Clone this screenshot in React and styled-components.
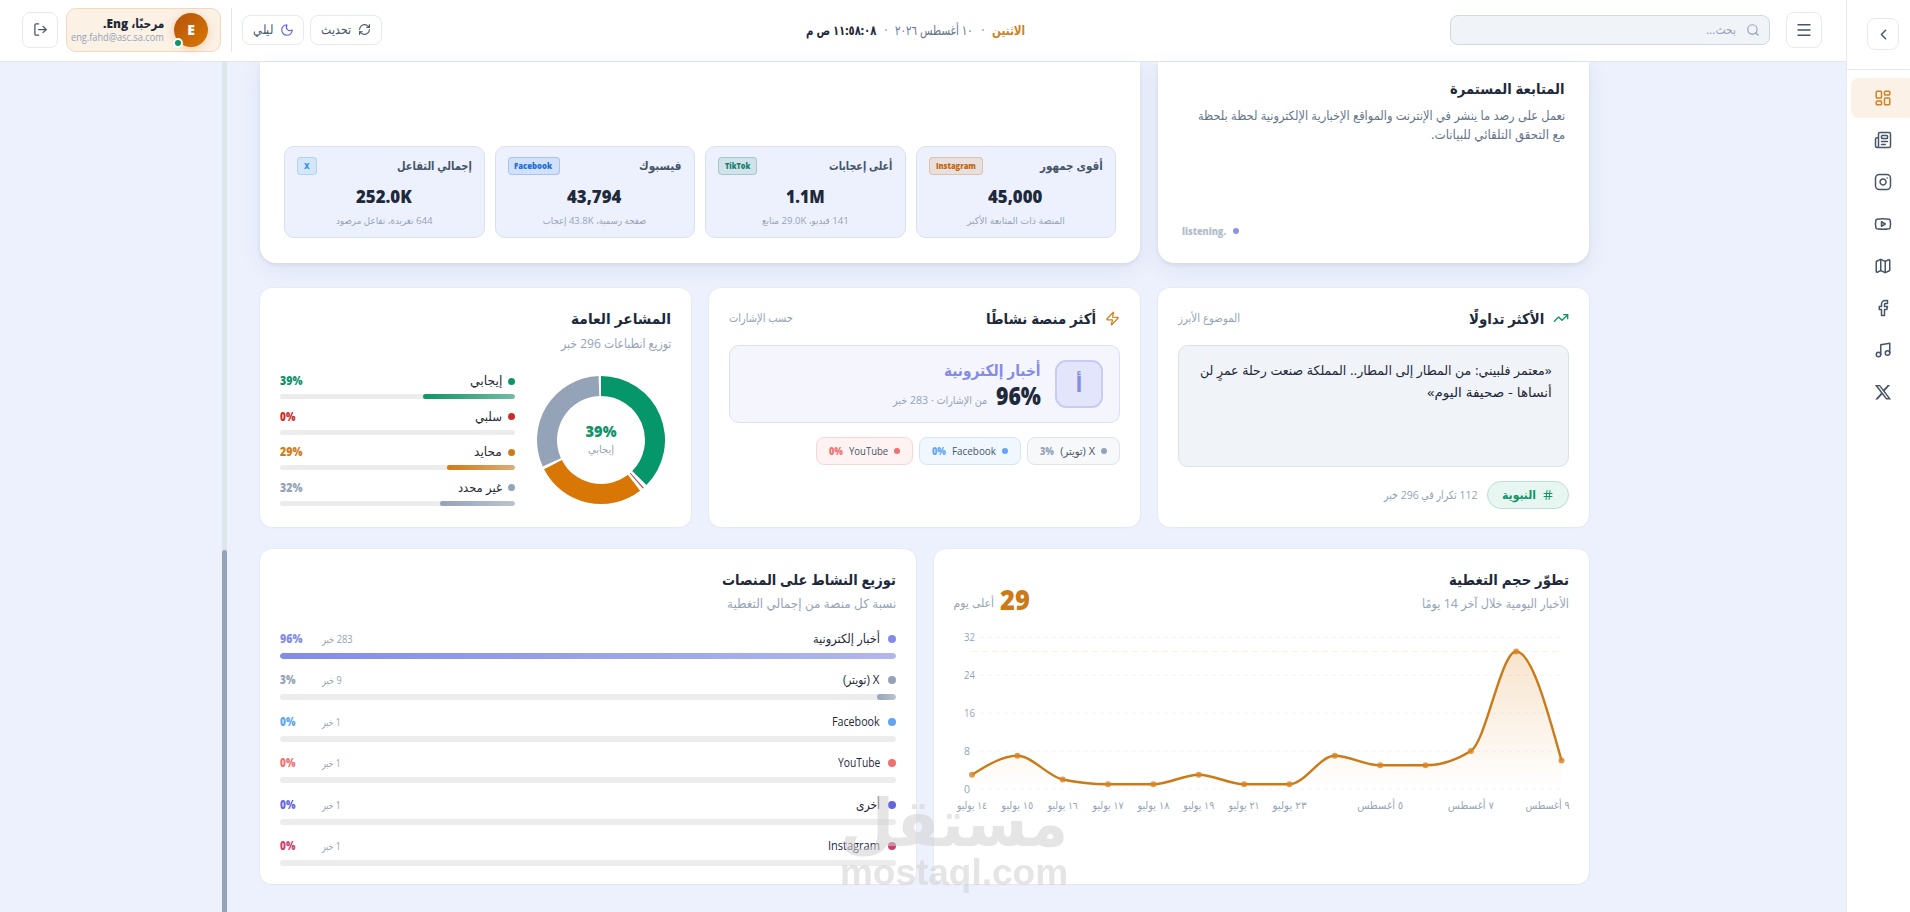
import React, { useLayoutEffect, useRef, useState } from 'react'
import styled, { createGlobalStyle } from 'styled-components'
import {
	ChevronLeft,
	Facebook,
	Hash,
	Instagram,
	LayoutDashboard,
	LogOut,
	Map,
	Menu,
	Moon,
	Music,
	Newspaper,
	RefreshCw,
	Search,
	TrendingUp,
	Youtube,
	Zap,
} from 'lucide-react'

const GlobalStyle = createGlobalStyle`
	* {
		box-sizing: border-box;
		margin: 0;
		padding: 0;
	}

	body {
		overflow: hidden;
		font-family: 'Open Sans', 'DejaVu Sans Condensed', 'DejaVu Sans', sans-serif;
		color: #1e293b;
		background-color: #edf1fd;
	}
`

/* ---------- text ---------- */

const LabelBox = styled.span`
	display: block;
	flex: none;
	width: ${p => p.$w}px;
	height: ${p => p.$lh}px;
	line-height: ${p => p.$lh}px;
	font-size: ${p => p.$size}px;
	font-weight: ${p => (p.$bold ? 800 : 400)};
	color: ${p => p.$color || '#1e293b'};
	white-space: nowrap;
`

const LabelText = styled.span`
	display: block;
	width: max-content;
	transform-origin: right center;
`

// one line of text, squeezed to the width of its slot
const Label = ({ w, size = 12, lh = 18, bold, color, dir, children }) => {
	const ref = useRef(null)
	const [scale, setScale] = useState(1)

	useLayoutEffect(() => {
		setScale(w / ref.current.offsetWidth)
	}, [w, children])

	return (
		<LabelBox $w={w} $lh={lh} $size={size} $bold={bold} $color={color}>
			<LabelText ref={ref} dir={dir} style={{ transform: `scaleX(${scale})` }}>
				{children}
			</LabelText>
		</LabelBox>
	)
}

/* ---------- shell ---------- */

const Page = styled.div`
	display: flex;
	width: 1910px;
	height: 912px;
	overflow: hidden;
`

const Main = styled.div`
	display: flex;
	flex-direction: column;
	flex: none;
	width: 1846px;
	height: 912px;
`

const Sidebar = styled.aside`
	flex: none;
	width: 73px;
	border-left: 1px solid #e5e8ec;
	background-color: #fff;
`

const SidebarTop = styled.div`
	display: flex;
	justify-content: center;
	align-items: flex-start;
	height: 70px;
	padding-top: 18px;
	border-bottom: 1px solid #e5e8ec;
`

const SquareButton = styled.button`
	display: flex;
	flex: none;
	align-items: center;
	justify-content: center;
	width: ${p => p.$size}px;
	height: ${p => p.$size}px;
	border: 1px solid #e6e9ed;
	border-radius: 8px;
	color: #475569;
	background-color: #fff;
`

const Nav = styled.nav`
	display: flex;
	flex-direction: column;
	gap: 2px;
	padding: 8px 4px;
`

const NavItem = styled.a`
	display: flex;
	align-items: center;
	justify-content: center;
	height: 40px;
	border-radius: 8px;
	color: ${p => (p.$active ? '#d08427' : '#475569')};
	background-color: ${p => (p.$active ? '#fbf1e6' : 'transparent')};
`

const XLogo = () => (
	<svg width='18' height='18' viewBox='0 0 24 24' fill='currentColor'>
		<path d='M18.2 2.6h3.3l-7.2 8.2 8.5 11.2h-6.7l-5.2-6.8-6 6.8H1.6l7.7-8.8L1.2 2.6H8l4.7 6.2zm-1.2 17.5h1.9L7.1 4.4h-2z' />
	</svg>
)

/* ---------- header ---------- */

const Header = styled.header`
	display: flex;
	flex: none;
	align-items: center;
	height: 62px;
	padding: 0 24px 2px 22px;
	border-bottom: 1px solid #e3e7ec;
	background-color: #fff;
	direction: rtl;
`

const SearchBox = styled.div`
	display: flex;
	align-items: center;
	gap: 10px;
	width: 320px;
	height: 30px;
	margin-right: 16px;
	padding: 0 9px;
	border: 1px solid #d0d7df;
	border-radius: 8px;
	color: #94a3b8;
	background-color: #f0f4f9;
`

const DateRow = styled.div`
	display: flex;
	align-items: center;
	gap: 8.5px;
	margin-right: 425px;
`

const Sep = styled.i`
	width: 2px;
	height: 2px;
	border-radius: 50%;
	background-color: #a3aebd;
`

const Actions = styled.div`
	display: flex;
	align-items: center;
	gap: 6px;
	margin-right: auto;
`

const ActionButton = styled.button`
	display: flex;
	align-items: center;
	justify-content: center;
	gap: 7px;
	width: ${p => p.$w}px;
	height: 30px;
	border: 1px solid #e6e9ed;
	border-radius: 8px;
	color: ${p => p.$color};
	background-color: #fff;
`

const Divider = styled.i`
	width: 1px;
	height: 44px;
	margin: 0 10px;
	background-color: #e2e6eb;
`

const UserCard = styled.div`
	display: flex;
	align-items: center;
	gap: 10px;
	width: 155px;
	height: 44px;
	margin-left: 8px;
	padding-right: 12px;
	border: 1px solid #f1d9b9;
	border-radius: 10px;
	background-color: #fcf1e5;
`

const Avatar = styled.div`
	position: relative;
	display: flex;
	flex: none;
	align-items: center;
	justify-content: center;
	width: 34px;
	height: 34px;
	border-radius: 50%;
	font-size: 14px;
	font-weight: 800;
	color: #fff;
	background: linear-gradient(135deg, #b45309, #d97706);
	box-shadow: 0 2px 8px rgba(217, 119, 6, 0.3);
`

const Online = styled.i`
	position: absolute;
	bottom: -1px;
	left: -1px;
	width: 10px;
	height: 10px;
	border: 2px solid #fff;
	border-radius: 50%;
	background-color: #0f9467;
`

const UserText = styled.div`
	display: flex;
	flex-direction: column;
`

/* ---------- content ---------- */

const Scroller = styled.main`
	display: flex;
	flex: 1;
	min-height: 0;
	padding-left: 222px;
`

const Track = styled.div`
	display: flex;
	align-items: flex-end;
	flex: none;
	width: 5px;
	background-color: #dfe5ec;
`

const Thumb = styled.div`
	width: 5px;
	height: 362px;
	border-radius: 3px 3px 0 0;
	background-color: #94a3b8;
`

const Content = styled.div`
	display: flex;
	flex-direction: column;
	width: 1329px;
	margin-left: 33px;
	direction: rtl;
`

const Row = styled.div`
	display: grid;
	flex: none;
	grid-template-columns: ${p => p.$cols};
	grid-template-rows: ${p => p.$h}px;
	gap: 18px;
	margin-bottom: ${p => p.$mb || 0}px;
`

const Card = styled.section`
	display: flex;
	flex-direction: column;
	min-width: 0;
	padding: 19px 20px 16px;
	border-radius: 12px;
	background-color: #fff;
	box-shadow: 0 0 0 1px rgba(100, 116, 139, 0.04), 0 1px 3px rgba(80, 90, 160, 0.04);
`

const HeroCard = styled(Card)`
	padding: ${p => p.$pad};
	border-radius: 0 0 16px 16px;
	box-shadow: 0 2px 4px rgba(15, 23, 42, 0.07), 0 6px 22px rgba(80, 90, 160, 0.09);
`

const Lines = styled.div`
	display: flex;
	flex-direction: column;
	align-items: flex-start;
	padding-top: ${p => p.$top || 0}px;
`

const Listening = styled.div`
	display: flex;
	align-items: center;
	justify-content: flex-end;
	gap: 7px;
	margin-top: auto;
`

const Dot = styled.i`
	flex: none;
	width: ${p => p.$size}px;
	height: ${p => p.$size}px;
	border-radius: 50%;
	background-color: ${p => p.$color};
`

const Stats = styled.div`
	display: grid;
	grid-template-columns: repeat(4, 1fr);
	gap: 10px;
`

const Stat = styled.div`
	display: flex;
	flex-direction: column;
	align-items: center;
	height: 92px;
	padding: 10px 12px;
	border: 1px solid #dae1ee;
	border-radius: 10px;
	background-color: #edf1fd;
`

const StatHead = styled.div`
	display: flex;
	align-items: center;
	justify-content: space-between;
	width: 100%;
	margin-bottom: 9px;
`

const Badge = styled.span`
	display: flex;
	align-items: center;
	height: 18px;
	padding: 0 6px;
	border: 1px solid ${p => p.$color}40;
	border-radius: 4px;
	background-color: ${p => p.$color}1f;
`

const CardHead = styled.div`
	display: flex;
	align-items: center;
	justify-content: space-between;
	height: 22px;
	margin-bottom: 16px;
`

const CardTitle = styled.div`
	display: flex;
	align-items: center;
	gap: 9px;
`

const Quote = styled.div`
	flex: none;
	height: 122px;
	padding: 13px 16px;
	border: 1px solid #dbe1e8;
	border-radius: 10px;
	background-color: #f0f4f9;
`

const TagRow = styled.div`
	display: flex;
	align-items: center;
	gap: 10px;
	margin-top: 14px;
`

const Tag = styled.span`
	display: flex;
	align-items: center;
	justify-content: center;
	gap: 6px;
	width: 82px;
	height: 28px;
	border: 1px solid #b9e1d1;
	border-radius: 14px;
	color: #0f9467;
	background-color: #e8f6f1;
`

const TopPlatform = styled.div`
	display: flex;
	gap: 14px;
	height: 78px;
	padding: 14px 16px;
	border: 1px solid #dcdff3;
	border-radius: 10px;
	background-color: #f5f6fd;
`

const Tile = styled.div`
	display: flex;
	flex: none;
	align-items: center;
	justify-content: center;
	width: 48px;
	height: 48px;
	border: 2px solid #c8ccf3;
	border-radius: 11px;
	font-size: 21px;
	font-weight: 700;
	color: #858ce6;
	background-color: #e3e5fb;
`

const Baseline = styled.div`
	display: flex;
	align-items: center;
	gap: 9px;
`

const Chips = styled.div`
	display: flex;
	gap: 6px;
	margin-top: 14px;
`

const Chip = styled.span`
	display: flex;
	align-items: center;
	gap: 6px;
	height: 28px;
	padding: 0 12px;
	border: 1px solid ${p => p.$border};
	border-radius: 8px;
	background-color: ${p => p.$bg};
`

const Mood = styled.div`
	display: flex;
	gap: 22px;
	margin-top: 19px;
`

const Donut = styled.svg`
	flex: none;
	margin: 4px 6px 0 0;
`

const Bars = styled.div`
	display: flex;
	flex: 1;
	flex-direction: column;
`

const BarItem = styled.div`
	height: ${p => p.$h}px;
`

const BarHead = styled.div`
	display: flex;
	align-items: center;
	gap: ${p => p.$gap}px;
	height: 18px;
	margin-bottom: ${p => p.$mb}px;
`

const Push = styled.span`
	display: flex;
	justify-content: flex-end;
	width: ${p => p.$w}px;
	margin-right: ${p => (p.$auto ? 'auto' : 0)};
`

const Bar = styled.div`
	height: ${p => p.$h}px;
	border-radius: 3px;
	background-color: #ececec;
	overflow: hidden;
`

const Fill = styled.div`
	height: 100%;
	border-radius: 3px;
	background: linear-gradient(90deg, ${p => p.$color}, ${p => p.$color}8c);
`

const ChartHead = styled.div`
	display: flex;
	align-items: flex-end;
	justify-content: space-between;
	height: 46px;
	margin-bottom: ${p => p.$mb}px;
`

const Peak = styled.div`
	display: flex;
	align-items: center;
	gap: 6px;
	margin-bottom: 1px;
`

const Chart = styled.svg`
	display: block;
	margin: 0 -20px;
	overflow: visible;
`

const Watermark = styled.svg`
	position: fixed;
	top: 780px;
	left: 838px;
	overflow: visible;
	opacity: 0.55;
	direction: ltr;
`

/* ---------- data ---------- */

const navIcons = [LayoutDashboard, Newspaper, Instagram, Youtube, Map, Facebook, Music]

const stats = [
	{ title: 'أقوى جمهور', tw: 63, tag: 'Instagram', gw: 40, color: '#c2650c', value: '45,000', vw: 54, sub: 'المنصة ذات المتابعة الأكبر', sw: 98 },
	{ title: 'أعلى إعجابات', tw: 63, tag: 'TikTok', gw: 25, color: '#0f7f6f', value: '1.1M', vw: 39, sub: '141 فيديو، 29.0K متابع', sw: 87 },
	{ title: 'فيسبوك', tw: 43, tag: 'Facebook', gw: 38, color: '#1c6fdc', value: '43,794', vw: 54, sub: 'صفحة رسمية، 43.8K إعجاب', sw: 103 },
	{ title: 'إجمالي التفاعل', tw: 75, tag: 'X', gw: 6, color: '#2f9be6', value: '252.0K', vw: 56, sub: '644 تغريدة، تفاعل مرصود', sw: 97 },
]

const chips = [
	{ name: 'X (تويتر)', w: 35, pct: '3%', color: '#94a3b8', bg: '#f6f8fa', border: '#dfe4ea' },
	{ name: 'Facebook', w: 44, pct: '0%', color: '#60a5fa', bg: '#f0f7fe', border: '#d3e5f6' },
	{ name: 'YouTube', w: 39, pct: '0%', color: '#ef7070', bg: '#fef2f2', border: '#f8d6d6' },
]

const moods = [
	{ name: 'إيجابي', w: 32, value: 39, pw: 22, color: '#0f9467' },
	{ name: 'سلبي', w: 27, value: 0, pw: 15, color: '#cc2b2b' },
	{ name: 'محايد', w: 28, value: 29, pw: 22, color: '#cf7a15' },
	{ name: 'غير محدد', w: 44, value: 32, pw: 22, color: '#94a3b8' },
]

const platforms = [
	{ name: 'أخبار إلكترونية', w: 67, count: '283 خبر', cw: 31, pct: '96%', pw: 22, fill: 100, color: '#818cea' },
	{ name: 'X (تويتر)', w: 37, count: '9 خبر', cw: 20, pct: '3%', pw: 15, fill: 3.04, color: '#94a3b8' },
	{ name: 'Facebook', w: 48, count: '1 خبر', cw: 19, pct: '0%', pw: 15, fill: 0, color: '#60a5f0' },
	{ name: 'YouTube', w: 42, count: '1 خبر', cw: 19, pct: '0%', pw: 15, fill: 0, color: '#f07070' },
	{ name: 'أخرى', w: 24, count: '1 خبر', cw: 19, pct: '0%', pw: 15, fill: 0, color: '#6366e0' },
	{ name: 'Instagram', w: 52, count: '1 خبر', cw: 19, pct: '0%', pw: 15, fill: 0, color: '#cf3f6d' },
]

const slices = [
	{ from: 0, to: 134.8, color: '#059669' },
	{ from: 138.1, to: 139.2, color: '#b9413c' },
	{ from: 142.3, to: 242.8, color: '#d97706' },
	{ from: 245.6, to: 357.8, color: '#94a3b8' },
]

const coverage = [3, 7, 2, 1, 1, 3, 1, 1, 7, 5, 5, 8, 29, 6]

const days = [
	{ i: 0, text: '١٤ يوليو', w: 30 },
	{ i: 1, text: '١٥ يوليو', w: 32 },
	{ i: 2, text: '١٦ يوليو', w: 30 },
	{ i: 3, text: '١٧ يوليو', w: 31 },
	{ i: 4, text: '١٨ يوليو', w: 32 },
	{ i: 5, text: '١٩ يوليو', w: 31 },
	{ i: 6, text: '٢١ يوليو', w: 31 },
	{ i: 7, text: '٢٣ يوليو', w: 34 },
	{ i: 9, text: '٥ أغسطس', w: 46 },
	{ i: 11, text: '٧ أغسطس', w: 46 },
	{ i: 13, text: '٩ أغسطس', w: 44, shift: -14 },
]

/* ---------- charts ---------- */

const polar = (r, deg) => {
	const a = ((deg - 90) * Math.PI) / 180
	return `${64 + r * Math.cos(a)} ${64 + r * Math.sin(a)}`
}

const slicePath = ({ from, to }) =>
	`M${polar(64, from)} A64 64 0 ${to - from > 180 ? 1 : 0} 1 ${polar(64, to)} ` +
	`L${polar(44, to)} A44 44 0 ${to - from > 180 ? 1 : 0} 0 ${polar(44, from)} Z`

const STEP = 45.35
const px = i => 38 + i * STEP
const py = v => 169 - v * 4.74

// monotone cubic through evenly spaced points
const linePath = values => {
	const slope = i => (py(values[i + 1]) - py(values[i])) / STEP
	const last = values.length - 1
	const tangents = values.map((_, i) => {
		if (i === 0 || i === last) return 0
		const a = slope(i - 1)
		const b = slope(i)
		return (Math.sign(a) + Math.sign(b)) * Math.min(Math.abs(a), Math.abs(b), Math.abs(a + b) / 4)
	})
	tangents[0] = (3 * slope(0) - tangents[1]) / 2
	tangents[last] = (3 * slope(last - 1) - tangents[last - 1]) / 2

	const d = STEP / 3
	return values.slice(1).reduce((path, v, i) => {
		const x0 = px(i)
		const x1 = px(i + 1)
		return (
			path +
			` C${x0 + d} ${py(values[i]) + d * tangents[i]} ${x1 - d} ${py(v) - d * tangents[i + 1]} ${x1} ${py(v)}`
		)
	}, `M${px(0)} ${py(values[0])}`)
}

const CoverageChart = () => {
	const line = linePath(coverage)
	return (
		<Chart width='655' height='200' direction='ltr'>
			<defs>
				<linearGradient id='area' x1='0' y1='0' x2='0' y2='1'>
					<stop offset='0' stopColor='#d97706' stopOpacity='0.2' />
					<stop offset='1' stopColor='#d97706' stopOpacity='0' />
				</linearGradient>
			</defs>
			{[0, 8, 16, 24, 32].map(v => (
				<g key={v}>
					<line x1='46' x2={px(13)} y1={py(v)} y2={py(v)} stroke='#f0f2f5' strokeDasharray='4 4' />
					<text x='30' y={py(v) + 4} fontSize='10' fill='#94a3b8' textLength={v < 10 ? 6 : 11} lengthAdjust='spacingAndGlyphs'>
						{v}
					</text>
				</g>
			))}
			<line x1={px(0)} x2={px(13)} y1={py(29)} y2={py(29)} stroke='#fcefdc' strokeDasharray='6 4' />
			<path d={`${line} L${px(13)} ${py(0)} L${px(0)} ${py(0)} Z`} fill='url(#area)' />
			<path d={line} fill='none' stroke='#cb7a17' strokeWidth='2.4' />
			{coverage.map((v, i) => (
				<circle key={i} cx={px(i)} cy={py(v)} r='3' fill='#d98324' fillOpacity='0.8' />
			))}
			{days.map(day => (
				<text
					key={day.i}
					x={px(day.i) + (day.shift || 0)}
					y='189'
					fontSize='10.5'
					fill='#94a3b8'
					textAnchor='middle'
					direction='rtl'
					textLength={day.w}
					lengthAdjust='spacingAndGlyphs'
				>
					{day.text}
				</text>
			))}
		</Chart>
	)
}

/* ---------- page ---------- */

const TopBar = () => (
	<Header>
		<SquareButton $size={36}>
			<Menu size={18} strokeWidth={1.8} />
		</SquareButton>
		<SearchBox>
			<Search size={14} />
			<Label w={30} size={12} color='#94a3b8'>بحث...</Label>
		</SearchBox>
		<DateRow>
			<Label w={33} size={13} bold color='#cf7f1e'>الاثنين</Label>
			<Sep />
			<Label w={78} size={13} color='#64748b'>١٠ أغسطس ٢٠٢٦</Label>
			<Sep />
			<Label w={70} size={13} bold>١١:٥٨:٠٨ ص م</Label>
		</DateRow>
		<Actions>
			<ActionButton $w={72} $color='#475569'>
				<RefreshCw size={13} />
				<Label w={30} size={13} color='#475569'>تحديث</Label>
			</ActionButton>
			<ActionButton $w={62} $color='#6366d8'>
				<Moon size={14} />
				<Label w={20} size={13} color='#475569'>ليلي</Label>
			</ActionButton>
		</Actions>
		<Divider />
		<UserCard>
			<Avatar>
				E
				<Online />
			</Avatar>
			<UserText>
				<Label w={61} size={13} lh={15} bold>مرحبًا، Eng.</Label>
				<Label w={93} size={10} lh={12} color='#94a3b8'>eng.fahd@asc.sa.com</Label>
			</UserText>
		</UserCard>
		<SquareButton $size={36}>
			<LogOut size={15} />
		</SquareButton>
	</Header>
)

const Overview = () => (
	<Row $cols='431px 880px' $h={201} $mb={25}>
		<HeroCard $pad='18px 24px 19px'>
			<Label w={115} size={14.5} bold>المتابعة المستمرة</Label>
			<Lines $top={8}>
				<Label w={367} size={12.5} lh={19} color='#64748b'>
					نعمل على رصد ما ينشر في الإنترنت والمواقع الإخبارية الإلكترونية لحظة بلحظة
				</Label>
				<Label w={134} size={12.5} lh={19} color='#64748b'>مع التحقق التلقائي للبيانات.</Label>
			</Lines>
			<Listening>
				<Dot $size={6} $color='#8d93e2' />
				<Label w={44} size={10} lh={26} bold color='#b1bccb' dir='ltr'>listening.</Label>
			</Listening>
		</HeroCard>
		<HeroCard $pad='84px 24px 0'>
			<Stats>
				{stats.map(s => (
					<Stat key={s.tag}>
						<StatHead>
							<Label w={s.tw} size={12} bold color='#475569'>{s.title}</Label>
							<Badge $color={s.color}>
								<Label w={s.gw} size={9} bold color={s.color} dir='ltr'>{s.tag}</Label>
							</Badge>
						</StatHead>
						<Label w={s.vw} size={18} lh={25} bold>{s.value}</Label>
						<Label w={s.sw} size={9.5} lh={23} color='#94a3b8'>{s.sub}</Label>
					</Stat>
				))}
			</Stats>
		</HeroCard>
	</Row>
)

const Insights = () => (
	<Row $cols='repeat(3, 431px)' $h={239} $mb={22}>
		<Card>
			<CardHead>
				<CardTitle>
					<TrendingUp size={16} color='#0f9467' />
					<Label w={75} size={15} lh={22} bold>الأكثر تداولًا</Label>
				</CardTitle>
				<Label w={62} size={11.5} color='#94a3b8'>الموضوع الأبرز</Label>
			</CardHead>
			<Quote>
				<Label w={352} size={13} lh={22}>
					«معتمر فلبيني: من المطار إلى المطار.. المملكة صنعت رحلة عمرٍ لن
				</Label>
				<Label w={125} size={13} lh={22}>أنساها - صحيفة اليوم»</Label>
			</Quote>
			<TagRow>
				<Tag>
					<Hash size={12} />
					<Label w={34} size={12} bold color='#0f9467'>النبوية</Label>
				</Tag>
				<Label w={93} size={11.5} color='#94a3b8'>112 تكرار في 296 خبر</Label>
			</TagRow>
		</Card>

		<Card>
			<CardHead>
				<CardTitle>
					<Zap size={15} color='#cf7f1e' />
					<Label w={110} size={15} lh={22} bold>أكثر منصة نشاطًا</Label>
				</CardTitle>
				<Label w={64} size={11.5} color='#94a3b8'>حسب الإشارات</Label>
			</CardHead>
			<TopPlatform>
				<Tile>أ</Tile>
				<Lines>
					<Label w={97} size={16} lh={21} bold color='#858ce6'>أخبار إلكترونية</Label>
					<Baseline>
						<Label w={45} size={24} lh={30} bold>96%</Label>
						<Lines $top={8}>
							<Label w={94} size={11} lh={20} color='#94a3b8'>من الإشارات · 283 خبر</Label>
						</Lines>
					</Baseline>
				</Lines>
			</TopPlatform>
			<Chips>
				{chips.map(c => (
					<Chip key={c.name} $bg={c.bg} $border={c.border}>
						<Dot $size={6} $color={c.color} />
						<Label w={c.w} size={11} color='#475569'>{c.name}</Label>
						<Label w={14} size={11} bold color={c.color}>{c.pct}</Label>
					</Chip>
				))}
			</Chips>
		</Card>

		<Card>
			<Label w={100} size={15} lh={22} bold>المشاعر العامة</Label>
			<Lines $top={6}>
				<Label w={110} size={12.5} color='#94a3b8'>توزيع انطباعات 296 خبر</Label>
			</Lines>
			<Mood>
				<Donut width='128' height='128' viewBox='0 0 128 128'>
					{slices.map(s => (
						<path key={s.from} d={slicePath(s)} fill={s.color} />
					))}
					<text x='64' y='61' fontSize='16' fontWeight='800' fill='#0f9467' textAnchor='middle' direction='ltr' textLength='31' lengthAdjust='spacingAndGlyphs'>
						39%
					</text>
					<text x='64' y='77' fontSize='10.5' fill='#94a3b8' textAnchor='middle' direction='rtl' textLength='26' lengthAdjust='spacingAndGlyphs'>
						إيجابي
					</text>
				</Donut>
				<Bars>
					{moods.map(m => (
						<BarItem key={m.name} $h={35.6}>
							<BarHead $gap={6} $mb={4}>
								<Dot $size={7} $color={m.color} />
								<Label w={m.w} size={12.5}>{m.name}</Label>
								<Push $auto>
									<Label w={m.pw} size={12} bold color={m.color}>{m.value}%</Label>
								</Push>
							</BarHead>
							<Bar $h={5}>
								<Fill $color={m.color} style={{ width: `${m.value}%` }} />
							</Bar>
						</BarItem>
					))}
				</Bars>
			</Mood>
		</Card>
	</Row>
)

const Distribution = () => (
	<Row $cols='655px 656px' $h={335}>
		<Card>
			<ChartHead $mb={6}>
				<Lines>
					<Label w={120} size={15} lh={22} bold>تطوّر حجم التغطية</Label>
					<Lines $top={4}>
						<Label w={147} size={12.5} lh={20} color='#94a3b8'>الأخبار اليومية خلال آخر 14 يومًا</Label>
					</Lines>
				</Lines>
				<Peak>
					<Label w={30} size={28} lh={28} bold color='#cb7a17'>29</Label>
					<Lines $top={8}>
						<Label w={40} size={12} lh={20} color='#94a3b8'>أعلى يوم</Label>
					</Lines>
				</Peak>
			</ChartHead>
			<CoverageChart />
		</Card>
		<Card>
			<ChartHead $mb={16}>
				<Lines>
					<Label w={174} size={15} lh={22} bold>توزيع النشاط على المنصات</Label>
					<Lines $top={4}>
						<Label w={169} size={12.5} lh={20} color='#94a3b8'>نسبة كل منصة من إجمالي التغطية</Label>
					</Lines>
				</Lines>
			</ChartHead>
			<Bars>
				{platforms.map(p => (
					<BarItem key={p.name} $h={41.4}>
						<BarHead $gap={8} $mb={5}>
							<Dot $size={8} $color={p.color} />
							<Label w={p.w} size={12.5}>{p.name}</Label>
							<Push $auto>
								<Label w={p.cw} size={10.5} color='#94a3b8'>{p.count}</Label>
							</Push>
							<Push $w={34}>
								<Label w={p.pw} size={12} bold color={p.color}>{p.pct}</Label>
							</Push>
						</BarHead>
						<Bar $h={6}>
							<Fill $color={p.color} style={{ width: `${p.fill}%` }} />
						</Bar>
					</BarItem>
				))}
			</Bars>
		</Card>
	</Row>
)

const App = () => (
	<>
		<GlobalStyle />
		<Page>
			<Main>
				<TopBar />
				<Scroller>
					<Track>
						<Thumb />
					</Track>
					<Content>
						<Overview />
						<Insights />
						<Distribution />
					</Content>
				</Scroller>
			</Main>
			<Sidebar>
				<SidebarTop>
					<SquareButton $size={32}>
						<ChevronLeft size={17} />
					</SquareButton>
				</SidebarTop>
				<Nav>
					{navIcons.map((Icon, i) => (
						<NavItem key={i} $active={i === 0}>
							<Icon size={18} />
						</NavItem>
					))}
					<NavItem>
						<XLogo />
					</NavItem>
				</Nav>
			</Sidebar>
		</Page>
		<Watermark width='232' height='120' fill='#cfcfcf' fontWeight='700'>
			<text x='230' y='66' fontSize='66' direction='rtl' textLength='228' lengthAdjust='spacingAndGlyphs'>
				مستقل
			</text>
			<text x='2' y='105' fontSize='37' fontFamily='Liberation Sans' textLength='228' lengthAdjust='spacingAndGlyphs'>
				mostaql.com
			</text>
		</Watermark>
	</>
)

export default App
